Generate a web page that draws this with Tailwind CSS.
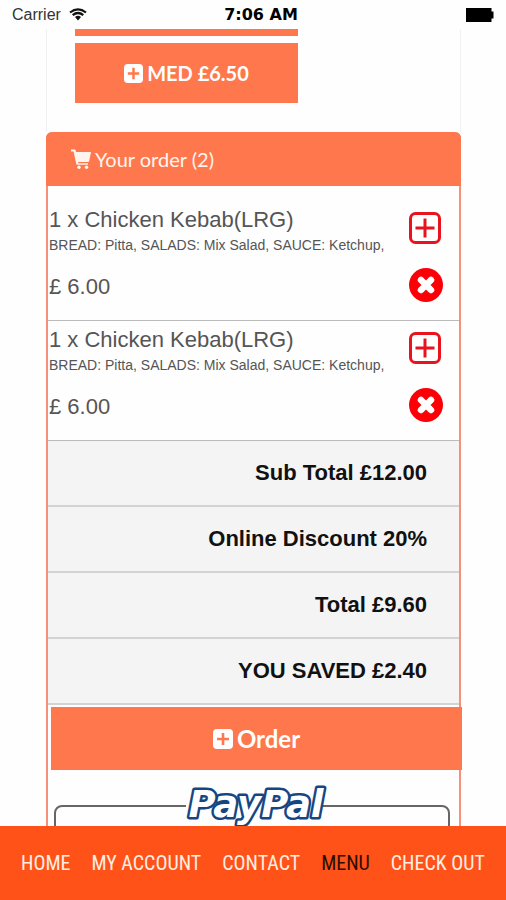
<!DOCTYPE html>
<html lang="en">
<head>
<meta charset="utf-8">
<meta name="viewport" content="width=device-width, initial-scale=1">
<title>Your order</title>
<script src="https://cdn.jsdelivr.net/npm/@tailwindcss/browser@4"></script>
</head>
<body class="flex h-screen flex-col overflow-hidden bg-[#fefefe] font-['Liberation_Sans',Arial,sans-serif] text-[#555]">
  <svg class="hidden" aria-hidden="true">
    <symbol id="plus-solid" viewBox="0 0 20 20">
      <path fill="currentColor" fill-rule="evenodd" d="M4 0h12a4 4 0 0 1 4 4v12a4 4 0 0 1-4 4H4a4 4 0 0 1-4-4V4a4 4 0 0 1 4-4zM8.700 4v4.700H4v2.600h4.700V16h2.600v-4.700H16V8.700h-4.700V4z"/>
    </symbol>
    <symbol id="plus-outline" viewBox="0 0 32 32">
      <rect x="1.500" y="1.500" width="29" height="29" rx="5" fill="#fff" stroke="#e8131c" stroke-width="3"/>
      <path d="M16 6.500v19M6.500 16h19" stroke="#e8131c" stroke-width="3"/>
    </symbol>
    <symbol id="remove" viewBox="0 0 34 34">
      <circle cx="17" cy="17" r="17" fill="#fb0007"/>
      <path d="M12 12l10 10M22 12L12 22" stroke="#fff" stroke-width="6.500" stroke-linecap="round"/>
    </symbol>
  </svg>

  <header class="grid h-[29px] shrink-0 grid-cols-3 items-center px-3 text-black">
    <div class="flex items-center gap-2 text-base text-[#333]">
      <span>Carrier</span>
      <svg class="h-[13px] w-[18px]" viewBox="0 0 18 13" fill="none" stroke="#111" stroke-width="2.200" aria-label="Wi-Fi">
        <path d="M1 4.500Q9-1.800 17 4.500M3.700 7.200Q9 2.800 14.300 7.200"/>
        <path d="M6 9Q9 6.600 12 9L9 12.500z" fill="#111" stroke="none"/>
      </svg>
    </div>
    <time class="pl-4 text-center font-['DejaVu_Sans','Liberation_Sans',sans-serif] text-base font-bold whitespace-nowrap">7:06 AM</time>
    <svg class="h-[14px] w-[28px] justify-self-end" viewBox="0 0 28 14" aria-label="Battery full"><path d="M0 0H25.500V3.500H27.500V10.500H25.500V14H0z"/></svg>
  </header>

  <main class="min-h-0 flex-1 overflow-hidden pr-[45px] pl-[46px]">
    <div class="border-x border-[#f1f1f1]">
      <div class="mr-[162px] ml-[28px] flex flex-col gap-[7px] pb-[29px] font-[Lato,sans-serif] text-white">
        <div class="h-[7px] bg-[#ff784d]"></div>
        <button type="button" class="flex h-[60px] items-center justify-center gap-1 bg-[#ff784d] text-xl font-bold">
          <svg class="size-[19px]" aria-hidden="true"><use href="#plus-solid"/></svg>MED £6.50
        </button>
      </div>
    </div>

    <section class="rounded-t-[6px] border-x-2 border-[#f79078]">
      <h2 class="-mx-[2px] flex h-[54px] items-center gap-1 rounded-t-[6px] bg-[#ff784d] pl-[25px] font-[Lato,sans-serif] text-xl text-[#fff4ee]">
        <svg class="size-5" viewBox="0 0 20 20" fill="currentColor" aria-hidden="true">
          <path d="M0 0.500h3.600q.8 0 1 .8l.4 1.700H20l-1.800 9q-.2.900-1.200 1H7l.3 1.200H17v1.600H6.300q-.8 0-1-.8L2.600 2.500H0z"/>
          <circle cx="8" cy="18.200" r="1.700"/><circle cx="15.500" cy="18.200" r="1.700"/>
        </svg>
        Your order (2)
      </h2>

      <ul>
        <li class="flex justify-between border-b border-[#bbb] pt-[20px] pr-[16px] pb-[17px]">
          <div class="pl-px">
            <h3 class="text-[22px] leading-[28px]">1 x Chicken Kebab(LRG)</h3>
            <p class="text-[14px] leading-[22px]">BREAD: Pitta, SALADS: Mix Salad, SAUCE: Ketchup,</p>
            <p class="pt-[15px] text-[22px] leading-[32px]">£ 6.00</p>
          </div>
          <div class="flex flex-col gap-[24px] pt-[6px]">
            <button type="button" aria-label="Add one more" class="size-8"><svg class="size-8"><use href="#plus-outline"/></svg></button>
            <button type="button" aria-label="Remove item" class="size-[34px]"><svg class="size-[34px]"><use href="#remove"/></svg></button>
          </div>
        </li>
        <li class="flex justify-between border-b border-[#bbb] pt-[5px] pr-[16px] pb-[17px]">
          <div class="pl-px">
            <h3 class="text-[22px] leading-[28px]">1 x Chicken Kebab(LRG)</h3>
            <p class="text-[14px] leading-[22px]">BREAD: Pitta, SALADS: Mix Salad, SAUCE: Ketchup,</p>
            <p class="pt-[15px] text-[22px] leading-[32px]">£ 6.00</p>
          </div>
          <div class="flex flex-col gap-[24px] pt-[6px]">
            <button type="button" aria-label="Add one more" class="size-8"><svg class="size-8"><use href="#plus-outline"/></svg></button>
            <button type="button" aria-label="Remove item" class="size-[34px]"><svg class="size-[34px]"><use href="#remove"/></svg></button>
          </div>
        </li>
      </ul>

      <dl class="divide-y-2 divide-[#d3d3d3] border-b-2 border-[#d3d3d3] bg-[#f4f4f4] text-[22px] leading-8 font-bold text-[#111] *:flex *:justify-end *:gap-[6px] *:py-4 *:pr-[32px]">
        <div><dt>Sub Total</dt><dd>£12.00</dd></div>
        <div><dt>Online Discount</dt><dd>20%</dd></div>
        <div><dt>Total</dt><dd>£9.60</dd></div>
        <div><dt>YOU SAVED</dt><dd>£2.40</dd></div>
      </dl>

      <div class="pt-[2px]">
        <button type="button" class="-mr-[3px] ml-[3px] flex h-[63px] w-full items-center justify-center gap-1 bg-[#ff784d] font-[Lato,sans-serif] text-2xl font-bold text-white">
          <svg class="size-[20px]" aria-hidden="true"><use href="#plus-solid"/></svg>Order
        </button>
      </div>

      <fieldset class="mt-[12px] mr-[9px] ml-[6px] h-[100px] rounded-[8px] border-2 border-[#666]">
        <legend class="mx-auto">
          <svg class="h-[48px] w-[132px] overflow-visible" viewBox="0 0 132 48" role="img" aria-label="PayPal">
            <text x="70" y="35" text-anchor="middle" class="font-['DejaVu_Sans','Liberation_Sans',sans-serif] text-[37px] font-bold italic" fill="#fff" stroke="#164581" stroke-width="5" stroke-linejoin="round" paint-order="stroke">PayPal</text>
          </svg>
        </legend>
      </fieldset>
    </section>
  </main>

  <nav class="flex h-[74px] shrink-0 items-center justify-between bg-[#ff5219] px-[21px] font-['Roboto_Condensed',Roboto,sans-serif] text-[20px] whitespace-nowrap text-[#ffeee2]">
    <a href="#home">HOME</a>
    <a href="#account">MY ACCOUNT</a>
    <a href="#contact">CONTACT</a>
    <a href="#menu" aria-current="page" class="text-[#2b0d00]">MENU</a>
    <a href="#checkout">CHECK OUT</a>
  </nav>
</body>
</html>
